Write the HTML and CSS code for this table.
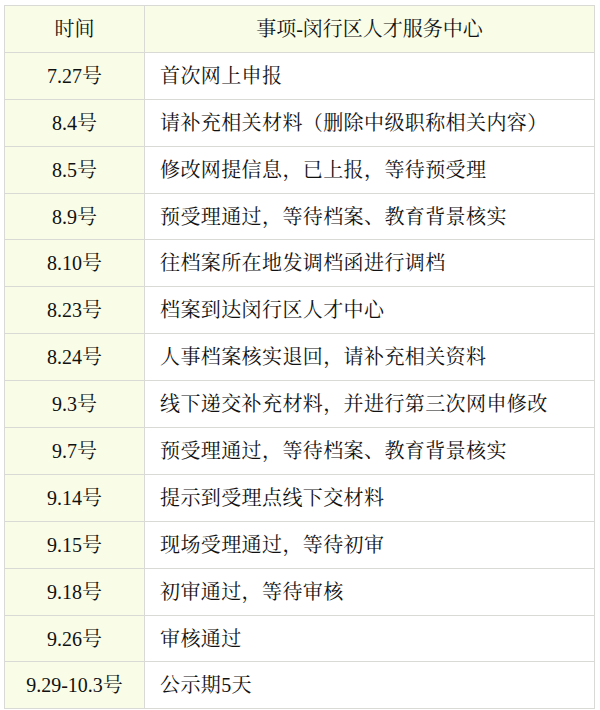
FILE: index.html
```html
<!DOCTYPE html>
<html lang="zh">
<head>
<meta charset="utf-8">
<link rel="stylesheet" href="styles.css">
</head>
<body>
<table class="schedule">
  <thead>
    <tr><th class="date">时间</th><th class="item">事项-闵行区人才服务中心</th></tr>
  </thead>
  <tbody>
    <tr><td class="date">7.27号</td><td class="item">首次网上申报</td></tr>
    <tr><td class="date">8.4号</td><td class="item">请补充相关材料（删除中级职称相关内容）</td></tr>
    <tr><td class="date">8.5号</td><td class="item">修改网提信息，已上报，等待预受理</td></tr>
    <tr><td class="date">8.9号</td><td class="item">预受理通过，等待档案、教育背景核实</td></tr>
    <tr><td class="date">8.10号</td><td class="item">往档案所在地发调档函进行调档</td></tr>
    <tr><td class="date">8.23号</td><td class="item">档案到达闵行区人才中心</td></tr>
    <tr><td class="date">8.24号</td><td class="item">人事档案核实退回，请补充相关资料</td></tr>
    <tr><td class="date">9.3号</td><td class="item">线下递交补充材料，并进行第三次网申修改</td></tr>
    <tr><td class="date">9.7号</td><td class="item">预受理通过，等待档案、教育背景核实</td></tr>
    <tr><td class="date">9.14号</td><td class="item">提示到受理点线下交材料</td></tr>
    <tr><td class="date">9.15号</td><td class="item">现场受理通过，等待初审</td></tr>
    <tr><td class="date">9.18号</td><td class="item">初审通过，等待审核</td></tr>
    <tr><td class="date">9.26号</td><td class="item">审核通过</td></tr>
    <tr><td class="date">9.29-10.3号</td><td class="item">公示期5天</td></tr>
  </tbody>
</table>
</body>
</html>
```
FILE: styles.css
```css
html, body {
  margin: 0;
  padding: 0;
  background: #ffffff;
}
body {
  padding: 5px 0 0 4px;
  font-family: "Liberation Serif", "Noto Serif CJK SC", "Noto Sans CJK SC", serif;
  color: #111111;
}
.schedule {
  border-collapse: collapse;
  width: 591px;
  table-layout: fixed;
}
.schedule th,
.schedule td {
  border: 1px solid #d9d9d6;
  height: 45.9px;
  padding: 0;
  font-size: 20px;
  font-weight: normal;
  line-height: 1;
}
.schedule th.date,
.schedule td.date {
  width: 139px;
  text-align: center;
  background: #f9fde8;
}
.schedule th.item {
  background: #f9fde8;
  text-align: center;
}
.schedule td.item {
  text-align: left;
  padding-left: 15px;
  background: #ffffff;
  letter-spacing: 0.4px;
}
```
